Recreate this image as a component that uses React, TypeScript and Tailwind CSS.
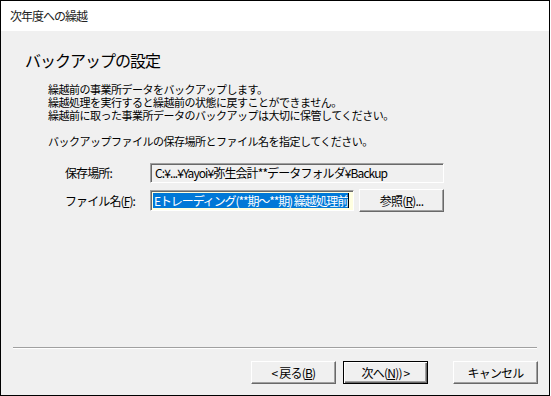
import React from "react";

const jp = {
  fontFamily: '"Noto Sans CJK JP", "Noto Sans", sans-serif',
};

const Btn = ({
  children,
  isDefault,
}: {
  children: React.ReactNode;
  isDefault?: boolean;
}) => (
  <div
    className={
      "flex h-[23px] w-[85px] items-center justify-center whitespace-pre bg-[#f0f0f0] text-[12px] tracking-[-0.8px] text-black " +
      (isDefault
        ? "border border-black shadow-[inset_1px_1px_0_#fff,inset_-1px_-1px_0_#696969,inset_-2px_-2px_0_#a0a0a0]"
        : "border border-t-white border-l-white border-r-[#696969] border-b-[#696969] shadow-[inset_-1px_-1px_0_#a0a0a0]")
    }
  >
    {children}
  </div>
);

export default function App() {
  return (
    <div className="h-[396px] w-[551px] bg-white" style={jp}>
      <div className="flex h-[396px] w-[550px] flex-col border border-black">
        <div className="flex h-[30px] items-center bg-white pl-[9px] text-[12px] tracking-[-1px] text-[#222]">
          次年度への繰越
        </div>
        <div className="flex flex-1 flex-col bg-[#f0f0f0]">
          <h1 className="mt-[19px] pl-[24px] text-[16px] leading-[20px] tracking-[-1px] text-black">
            バックアップの設定
          </h1>
          <div className="mt-[13px] pl-[47px] text-[11px] leading-[13px] tracking-[-0.5px] text-black">
            <p>繰越前の事業所データをバックアップします。</p>
            <p>繰越処理を実行すると繰越前の状態に戻すことができません。</p>
            <p>繰越前に取った事業所データのバックアップは大切に保管してください。</p>
            <p className="mt-[13px]">
              バックアップファイルの保存場所とファイル名を指定してください。
            </p>
          </div>
          <div className="mt-[15px] flex items-center pl-[64px] text-[12px] tracking-[-0.9px] text-black">
            <span className="w-[85px]">保存場所:</span>
            <div className="flex h-[20px] w-[294px] items-center border border-t-[#a0a0a0] border-l-[#a0a0a0] border-r-white border-b-white bg-[#f0f0f0] pl-[4px] shadow-[inset_1px_1px_0_#696969]">
              C:¥...¥Yayoi¥弥生会計**データフォルダ¥Backup
            </div>
          </div>
          <div className="mt-[6px] flex items-center pl-[64px] text-[12px] tracking-[-0.9px] text-black">
            <span className="w-[85px]">
              ファイル名(<span className="underline">F</span>):
            </span>
            <div className="flex h-[21px] w-[204px] items-stretch border border-t-[#a0a0a0] border-l-[#a0a0a0] border-r-white border-b-white bg-[#ffffe1] p-[2px] shadow-[inset_1px_1px_0_#696969]">
              <div className="flex flex-1 items-center overflow-hidden whitespace-pre">
                <span className="bg-[#0078d7] pl-[1px] leading-[15px] tracking-[-1.1px] text-white">
                  Eトレーディング(**期～**期) 繰越処理前
                </span>
                <span className="h-[15px] w-[1px] shrink-0 bg-black" />
              </div>
            </div>
            <div className="ml-[5px]">
              <Btn>
                参照(<span className="underline">R</span>)...
              </Btn>
            </div>
          </div>
          <div className="mx-[12px] mt-[135px] h-[2px] border-t border-t-[#a0a0a0] border-b border-b-white" />
          <div className="mt-[12px] flex pl-[250px]">
            <Btn>
              {"< 戻る("}<span className="underline">B</span>)
            </Btn>
            <div className="ml-[7px]">
              <Btn isDefault>
                次へ(<span className="underline">N</span>){") >"}
              </Btn>
            </div>
            <div className="ml-[25px]">
              <Btn>キャンセル</Btn>
            </div>
          </div>
        </div>
      </div>
    </div>
  );
}
